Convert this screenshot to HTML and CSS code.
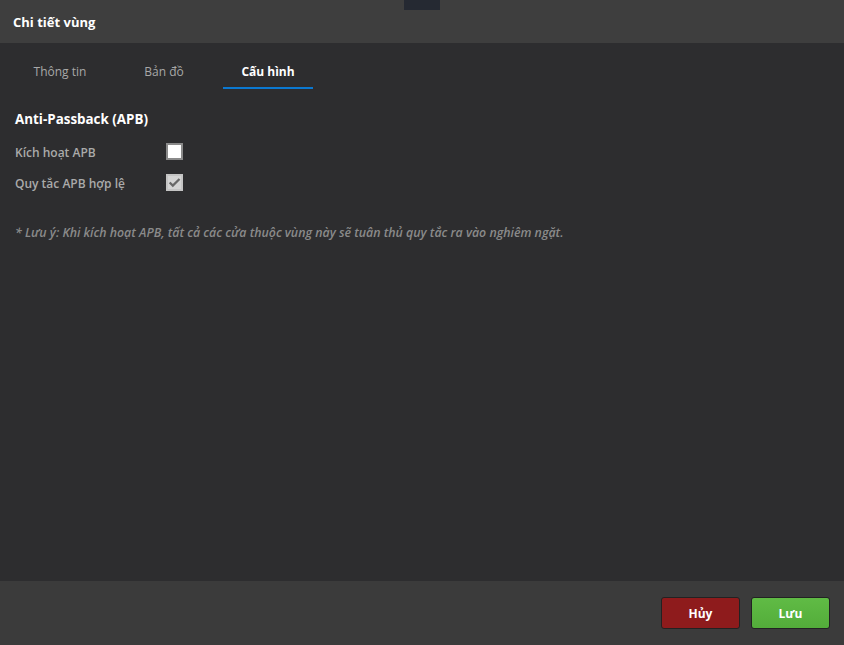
FILE: index.html
```html
<!DOCTYPE html>
<html lang="vi">
<head>
  <meta charset="UTF-8">
  <title>Chi tiết vùng</title>
  <link rel="stylesheet" href="styles.css">
</head>
<body>
  <div class="dialog">
    <header class="dialog-header">
      <h1 class="dialog-title">Chi tiết vùng</h1>
      <span class="drag-handle"></span>
    </header>

    <nav class="tabs">
      <a href="#" class="tab">Thông tin</a>
      <a href="#" class="tab">Bản đồ</a>
      <a href="#" class="tab active">Cấu hình</a>
    </nav>

    <main class="dialog-body">
      <h2 class="section-title">Anti-Passback (APB)</h2>

      <div class="field">
        <label class="field-label" for="apbEnabled">Kích hoạt APB</label>
        <input type="checkbox" id="apbEnabled" class="check">
      </div>
      <div class="field">
        <label class="field-label" for="apbValid">Quy tắc APB hợp lệ</label>
        <span class="check checked disabled" id="apbValid">
          <svg viewBox="0 0 14 14" width="15" height="15"><path d="M1.8 7l3.4 3.4L12.4 3.2" fill="none" stroke="#686868" stroke-width="2.4"/></svg>
        </span>
      </div>

      <p class="note">* Lưu ý: Khi kích hoạt APB, tất cả các cửa thuộc vùng này sẽ tuân thủ quy tắc ra vào nghiêm ngặt.</p>
    </main>

    <footer class="dialog-footer">
      <button class="btn btn-cancel">Hủy</button>
      <button class="btn btn-save">Lưu</button>
    </footer>
  </div>
</body>
</html>
```

FILE: styles.css
```css
* {
  margin: 0;
  padding: 0;
  box-sizing: border-box;
}

body {
  font-family: "Open Sans", "Noto Sans", sans-serif;
  background: #2d2d2f;
  color: #fff;
  width: 844px;
  height: 645px;
  overflow: hidden;
}

.dialog {
  display: flex;
  flex-direction: column;
  height: 645px;
}

.dialog-header {
  position: relative;
  height: 43px;
  background: #3e3e3e;
  display: flex;
  align-items: center;
  padding-left: 13px;
}

.dialog-title {
  font-size: 13px;
  font-weight: 700;
  color: #fff;
}

.drag-handle {
  position: absolute;
  left: 404px;
  top: 0;
  width: 36px;
  height: 10px;
  background: #252932;
}

.tabs {
  display: flex;
  gap: 14px;
  padding-left: 15px;
  background: #2d2d2f;
}

.tab {
  width: 90px;
  text-align: center;
  padding: 20px 0 6px;
  font-size: 12px;
  line-height: 18px;
  color: #a8a8a8;
  text-decoration: none;
  border-bottom: 2px solid transparent;
}

.tab.active {
  color: #fff;
  font-weight: 700;
  border-bottom-color: #0b78d0;
}

.dialog-body {
  flex: 1;
  padding: 20px 15px 0;
}

.section-title {
  font-size: 13.4px;
  font-weight: 700;
  color: #fff;
  line-height: 20px;
  margin-bottom: 13px;
}

.field {
  display: flex;
  align-items: center;
  height: 20px;
  margin-bottom: 11px;
}

.field-label {
  width: 151px;
  font-size: 12px;
  font-weight: 600;
  color: #aaa;
}

.check {
  appearance: none;
  width: 17px;
  height: 17px;
  background: #fff;
  border: 2px solid #8a8a8a;
  display: inline-flex;
  align-items: center;
  justify-content: center;
  margin-top: -1px;
}

.check.disabled {
  background: #d4d4d4;
  border-color: #c4c4c4;
}

.note {
  margin-top: 31px;
  font-size: 12.35px;
  font-style: italic;
  font-weight: 600;
  color: #8a8a8a;
}

.dialog-footer {
  height: 64px;
  background: #3b3b3b;
  display: flex;
  justify-content: flex-end;
  align-items: center;
  gap: 11px;
  padding-right: 14px;
}

.btn {
  width: 79px;
  height: 32px;
  border: 1px solid #222;
  border-radius: 3px;
  font-family: inherit;
  font-size: 12px;
  font-weight: 700;
  color: #fff;
  cursor: pointer;
}

.btn-cancel {
  background: #8e1b1c;
}

.btn-save {
  background: linear-gradient(#60bb45, #53ad3a);
}
```
